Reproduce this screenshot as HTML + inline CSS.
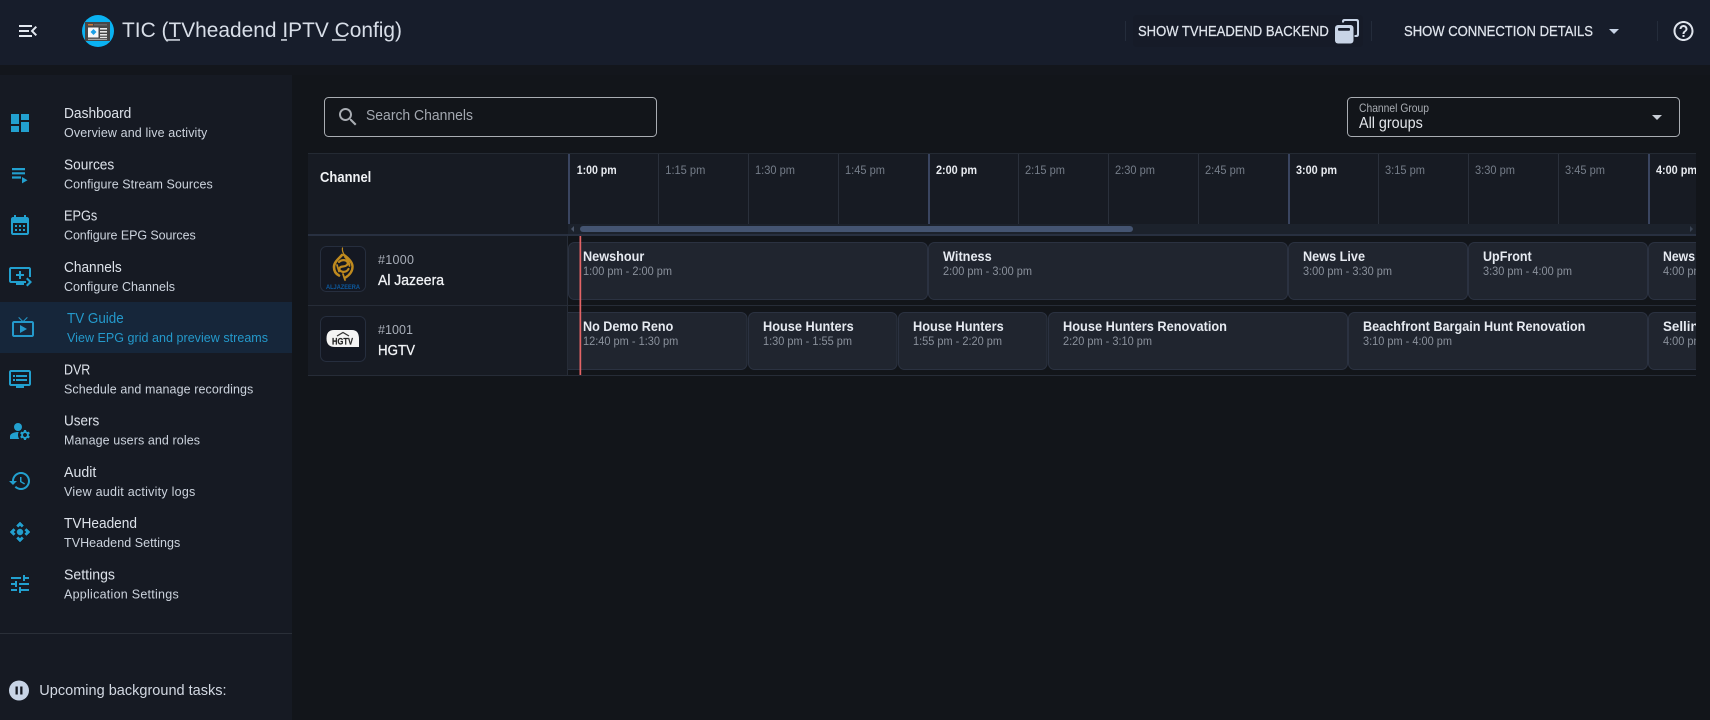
<!DOCTYPE html>
<html lang="en"><head><meta charset="utf-8"><title>TIC (TVheadend IPTV Config)</title>
<style>
html,body{margin:0;padding:0;width:1710px;height:720px;overflow:hidden;background:#12151a}
svg{display:block}
text{font-family:"Liberation Sans",Arial,sans-serif;white-space:pre}
.nt{font-size:14.5px;fill:#dde2ea}
.ns{font-size:12.5px;fill:#ccd3dd}
.ic{fill:#22a0cf}
.tm{font-size:11.5px;fill:#757d89}
.th{font-size:11.5px;font-weight:700;fill:#e8ebf0}
.pt{font-size:13.5px;font-weight:700;fill:#e6eaf1}
.pd{font-size:11.5px;fill:#8a919c}
.p{fill:#20252f;stroke:#2b3241;stroke-width:1}
.hb{font-size:14.5px;fill:#dfe4ec;stroke:#dfe4ec;stroke-width:.25}
</style></head><body>
<svg width="1710" height="720" viewBox="0 0 1710 720" xmlns="http://www.w3.org/2000/svg">
<defs>
<clipPath id="tl"><rect x="568" y="153" width="1128" height="223"/></clipPath>
</defs>
<rect width="1710" height="720" fill="#12151a"/>
<!-- header -->
<rect width="1710" height="65" fill="#171d2b"/>
<rect y="65" width="1710" height="10" fill="#13161c"/>
<path transform="translate(16 19)" fill="#e4e9f1" d="M3 18h13v-2H3v2zm0-5h10v-2H3v2zm0-7v2h13V6H3zm18 9.590L17.420 12 21 8.410 19.590 7l-5 5 5 5L21 15.590z"/>
<circle cx="98" cy="31" r="16" fill="#0ab2f2"/>
<rect x="85" y="22" width="25" height="19" fill="#474747"/>
<rect x="88" y="24" width="5" height="1.500" fill="#c9783a"/>
<rect x="94" y="24" width="13" height="1.500" fill="#666"/>
<rect x="88" y="27.500" width="10.500" height="10" fill="#f4f6f8"/>
<path d="M93.500 29l3 3-3 3-3-3z" fill="#1c9fe6"/>
<rect x="100" y="28" width="7" height="1.600" fill="#e8e8e8"/><rect x="100" y="31" width="7" height="1.600" fill="#e8e8e8"/><rect x="100" y="34" width="7" height="1.600" fill="#e8e8e8"/><rect x="100" y="36.800" width="7" height="1.200" fill="#e8e8e8"/>
<rect x="88" y="38.800" width="19" height="1" fill="#bbb"/>
<text x="122" y="37" font-size="21.500" fill="#d8dee8" textLength="280" lengthAdjust="spacingAndGlyphs">TIC (TVheadend IPTV Config)</text>
<rect x="167" y="39.200" width="13" height="1.500" fill="#d8dee8"/>
<rect x="281" y="39.200" width="6" height="1.500" fill="#d8dee8"/>
<rect x="332" y="39.200" width="14" height="1.500" fill="#d8dee8"/>
<rect x="1125" y="21" width="1" height="20" fill="#242c3b"/>
<rect x="1133" y="15" width="230" height="32" rx="4" fill="#161b28"/>
<text class="hb" x="1138" y="36" textLength="190.800" lengthAdjust="spacingAndGlyphs">SHOW TVHEADEND BACKEND</text>
<path d="M1342 21.500q0-2.500 2.500-2.500h12q2.500 0 2.500 2.500v13q0 2.500-2.500 2.500h-2v-2h1.500q1 0 1-1v-12q0-1-1-1h-11q-1 0-1 1v.5h-2z" fill="#c8d4e6"/>
<rect x="1335" y="25" width="18.500" height="18.500" rx="3" fill="#c8d4e6"/>
<rect x="1338" y="28" width="12" height="2.700" rx="1" fill="#171d2b"/>
<rect x="1371" y="21" width="1" height="20" fill="#242c3b"/>
<text class="hb" x="1404" y="36" textLength="189" lengthAdjust="spacingAndGlyphs">SHOW CONNECTION DETAILS</text>
<path d="M1609 29h10l-5 5z" fill="#c8d4e6"/>
<rect x="1657" y="21" width="1" height="20" fill="#242c3b"/>
<path transform="translate(1671.500 19)" fill="#dfe4ec" d="M11 18h2v-2h-2v2zm1-16C6.480 2 2 6.480 2 12s4.480 10 10 10 10-4.480 10-10S17.520 2 12 2zm0 18c-4.410 0-8-3.590-8-8s3.590-8 8-8 8 3.590 8 8-3.590 8-8 8zm0-14c-2.210 0-4 1.790-4 4h2c0-1.100.9-2 2-2s2 .9 2 2c0 2-3 1.750-3 5h2c0-2.250 3-2.500 3-5 0-2.210-1.790-4-4-4z"/>

<!-- sidebar -->
<rect y="75" width="292" height="645" fill="#161a23"/>
<rect y="302" width="292" height="51" fill="#16263a"/>
<rect y="633" width="292" height="1" fill="#2a2f38"/>
<path class="ic" transform="translate(8 111)" d="M3 13h8V3H3v10zm0 8h8v-6H3v6zm10 0h8V11h-8v10zm0-18v6h8V3h-8z"/>
<path class="ic" d="M12 168h13v2.200H12zM12 172.200h13v2.200H12zM12 176.400h9v2.200H12zM22 177l5.500 3.200-5.500 3.200z"/>
<path class="ic" transform="translate(8 213)" d="M19 4h-1V2h-2v2H8V2H6v2H5c-1.100 0-2 .9-2 2v14c0 1.100.9 2 2 2h14c1.100 0 2-.9 2-2V6c0-1.100-.9-2-2-2zm0 16H5V10h14v10zM9 14H7v-2h2v2zm4 0h-2v-2h2v2zm4 0h-2v-2h2v2zm-8 4H7v-2h2v2zm4 0h-2v-2h2v2zm4 0h-2v-2h2v2z"/>
<path class="ic" transform="translate(8 264)" d="M21 3H3c-1.110 0-2 .89-2 2v12c0 1.100.89 2 2 2h5v2h8v-2h2v-2H3V5h18v8h2V5c0-1.110-.9-2-2-2zm-8 7V7h-2v3H8v2h3v3h2v-3h3v-2h-3zm11 8l-4.500 4.500L18 21l3-3-3-3 1.500-1.500L24 18z"/>
<path fill="#2499cb" transform="translate(11 315)" d="M21 6h-7.590l3.290-3.290L16 2l-4 4-4-4-.71.71L10.590 6H3c-1.100 0-2 .89-2 2v12c0 1.100.9 2 2 2h18c1.100 0 2-.9 2-2V8c0-1.110-.9-2-2-2zm0 14H3V8h18v12zM9 10v8l7-4z"/>
<path class="ic" transform="translate(8 367)" d="M21 3H3c-1.100 0-2 .9-2 2v12c0 1.100.9 2 2 2h5v2h8v-2h5c1.100 0 2-.9 2-2V5c0-1.100-.9-2-2-2zm0 14H3V5h18v12zm-2-9H8v2h11V8zm0 4H8v2h11v-2zM7 8H5v2h2V8zm0 4H5v2h2v-2z"/>
<g class="ic" transform="translate(8 419)"><circle cx="10" cy="8" r="4"/><path d="M10.670 13.020C10.450 13.010 10.230 13 10 13c-2.420 0-4.680.67-6.610 1.820-.88.52-1.390 1.500-1.390 2.530V20h9.260c-.79-1.130-1.260-2.510-1.260-4 0-1.070.25-2.070.67-2.980z"/><path d="M20.750 16c0-.22-.03-.42-.06-.63l1.140-1.010-1-1.730-1.450.49c-.32-.27-.68-.48-1.080-.63L18 11h-2l-.3 1.490c-.4.15-.76.36-1.080.63l-1.450-.49-1 1.730 1.140 1.010c-.03.21-.06.41-.06.63s.03.42.06.63l-1.140 1.010 1 1.730 1.450-.49c.32.27.68.48 1.080.63L16 21h2l.3-1.490c.4-.15.76-.36 1.080-.63l1.450.49 1-1.730-1.140-1.010c.03-.21.06-.41.06-.63zM17 18c-1.100 0-2-.9-2-2s.9-2 2-2 2 .9 2 2-.9 2-2 2z"/></g>
<path class="ic" transform="translate(8 469)" d="M13 3c-4.970 0-9 4.030-9 9H1l3.890 3.890.07.14L9 12H6c0-3.870 3.130-7 7-7s7 3.130 7 7-3.130 7-7 7c-1.930 0-3.680-.79-4.940-2.060l-1.420 1.420C8.270 19.990 10.510 21 13 21c4.970 0 9-4.030 9-9s-4.030-9-9-9zm-1 5v5l4.280 2.540.72-1.210-3.500-2.080V8H12z"/>
<g class="ic" stroke="#22a0cf" stroke-width=".5" transform="translate(8 520)"><path d="M15.540 5.540L13.770 7.300 12 5.540 10.230 7.300 8.460 5.540 12 2l3.540 3.540zm2.920 10l-1.760-1.770L18.460 12l-1.760-1.770 1.760-1.770L22 12l-3.540 3.540zm-10 2.920l1.770-1.760L12 18.460l1.770-1.760 1.770 1.760L12 22l-3.540-3.540zm-2.920-10l1.760 1.770L5.540 12l1.760 1.770-1.760 1.770L2 12l3.540-3.540z"/><circle cx="12" cy="12" r="3"/></g>
<path class="ic" transform="translate(8 572)" d="M3 17v2h6v-2H3zM3 5v2h10V5H3zm10 16v-2h8v-2h-8v-2h-2v6h2zM7 9v2H3v2h4v2h2V9H7zm14 4v-2H11v2h10zm-6-4h2V7h4V5h-4V3h-2v6z"/>

<text class="nt" x="64" y="118" textLength="67.300" lengthAdjust="spacingAndGlyphs">Dashboard</text><text class="ns" x="64" y="137" textLength="143.300">Overview and live activity</text>
<text class="nt" x="64" y="169.250" textLength="50.300" lengthAdjust="spacingAndGlyphs">Sources</text><text class="ns" x="64" y="188.250" textLength="148.700">Configure Stream Sources</text>
<text class="nt" x="64" y="220.500" textLength="33.300" lengthAdjust="spacingAndGlyphs">EPGs</text><text class="ns" x="64" y="239.500" textLength="131.700">Configure EPG Sources</text>
<text class="nt" x="64" y="271.750" textLength="57.700" lengthAdjust="spacingAndGlyphs">Channels</text><text class="ns" x="64" y="290.750" textLength="111">Configure Channels</text>
<text class="nt" x="67" y="323" textLength="56.700" lengthAdjust="spacingAndGlyphs" style="fill:#2499cb">TV Guide</text><text class="ns" x="67" y="342" textLength="201" style="fill:#2499cb">View EPG grid and preview streams</text>
<text class="nt" x="64" y="374.250" textLength="26.300" lengthAdjust="spacingAndGlyphs">DVR</text><text class="ns" x="64" y="393.250" textLength="189.300">Schedule and manage recordings</text>
<text class="nt" x="64" y="425.500" textLength="35.300" lengthAdjust="spacingAndGlyphs">Users</text><text class="ns" x="64" y="444.500" textLength="136">Manage users and roles</text>
<text class="nt" x="64" y="476.750" textLength="32.300" lengthAdjust="spacingAndGlyphs">Audit</text><text class="ns" x="64" y="495.750" textLength="131.300">View audit activity logs</text>
<text class="nt" x="64" y="528" textLength="73" lengthAdjust="spacingAndGlyphs">TVHeadend</text><text class="ns" x="64" y="547" textLength="116.300">TVHeadend Settings</text>
<text class="nt" x="64" y="579.250" textLength="51" lengthAdjust="spacingAndGlyphs">Settings</text><text class="ns" x="64" y="598.250" textLength="114.700">Application Settings</text>

<circle cx="19" cy="690.500" r="10" fill="#c8d4e6"/>
<rect x="15.500" y="686.500" width="2.300" height="8" fill="#161a23"/><rect x="20.200" y="686.500" width="2.300" height="8" fill="#161a23"/>
<text x="39.300" y="695" font-size="14.500" fill="#d2d8e2" textLength="187.300" lengthAdjust="spacingAndGlyphs">Upcoming background tasks:</text>

<!-- search and select -->
<rect x="324.500" y="97.500" width="332" height="39" rx="4" fill="none" stroke="#a9adb3"/>
<path transform="translate(336 105)" fill="#a9adb3" d="M15.500 14h-.79l-.28-.27C15.410 12.590 16 11.110 16 9.500 16 5.910 13.090 3 9.500 3S3 5.910 3 9.500 5.910 16 9.500 16c1.610 0 3.090-.59 4.230-1.570l.27.28v.79l5 4.990L20.490 19l-4.990-5zm-6 0C7.010 14 5 11.990 5 9.500S7.010 5 9.500 5 14 7.010 14 9.500 11.990 14 9.500 14z"/>
<text x="366" y="120" font-size="14.500" fill="#a3a8b0" textLength="107" lengthAdjust="spacingAndGlyphs">Search Channels</text>
<rect x="1347.500" y="97.500" width="332" height="39" rx="4" fill="none" stroke="#a9adb3"/>
<text x="1359" y="112" font-size="12" fill="#a9adb3" textLength="70" lengthAdjust="spacingAndGlyphs">Channel Group</text>
<text x="1359" y="128" font-size="16" fill="#e4e7ec" textLength="63.800" lengthAdjust="spacingAndGlyphs">All groups</text>
<path d="M1652 115h10l-5 5z" fill="#c8cdd5"/>

<!-- table header -->
<rect x="308" y="153" width="1388" height="71" fill="#171b23"/>
<rect x="308" y="153" width="1388" height="1" fill="#242a33"/>
<rect x="308" y="224" width="260" height="11" fill="#171b23"/>
<rect x="568" y="224" width="1128" height="11" fill="#1c222c"/>
<rect x="308" y="234" width="1388" height="2" fill="#283040"/>
<text x="320" y="182" font-size="14.500" font-weight="700" fill="#f0f2f5" textLength="51.300" lengthAdjust="spacingAndGlyphs">Channel</text>
<g fill="#2a303b">
<rect x="658" y="154" width="1" height="70"/><rect x="748" y="154" width="1" height="70"/><rect x="838" y="154" width="1" height="70"/>
<rect x="1018" y="154" width="1" height="70"/><rect x="1108" y="154" width="1" height="70"/><rect x="1198" y="154" width="1" height="70"/>
<rect x="1378" y="154" width="1" height="70"/><rect x="1468" y="154" width="1" height="70"/><rect x="1558" y="154" width="1" height="70"/>
</g>
<g fill="#3a4560">
<rect x="568" y="154" width="2" height="70"/><rect x="928" y="154" width="2" height="70"/><rect x="1288" y="154" width="2" height="70"/><rect x="1648" y="154" width="2" height="70"/>
</g>
<g clip-path="url(#tl)">
<text class="th" x="576.700" y="174" textLength="40" lengthAdjust="spacingAndGlyphs">1:00 pm</text>
<text class="tm" x="665.300" y="174" textLength="40" lengthAdjust="spacingAndGlyphs">1:15 pm</text>
<text class="tm" x="755" y="174" textLength="40" lengthAdjust="spacingAndGlyphs">1:30 pm</text>
<text class="tm" x="845" y="174" textLength="40" lengthAdjust="spacingAndGlyphs">1:45 pm</text>
<text class="th" x="936" y="174" textLength="41" lengthAdjust="spacingAndGlyphs">2:00 pm</text>
<text class="tm" x="1025" y="174" textLength="40" lengthAdjust="spacingAndGlyphs">2:15 pm</text>
<text class="tm" x="1115" y="174" textLength="40" lengthAdjust="spacingAndGlyphs">2:30 pm</text>
<text class="tm" x="1205" y="174" textLength="40" lengthAdjust="spacingAndGlyphs">2:45 pm</text>
<text class="th" x="1296" y="174" textLength="41" lengthAdjust="spacingAndGlyphs">3:00 pm</text>
<text class="tm" x="1385" y="174" textLength="40" lengthAdjust="spacingAndGlyphs">3:15 pm</text>
<text class="tm" x="1475" y="174" textLength="40" lengthAdjust="spacingAndGlyphs">3:30 pm</text>
<text class="tm" x="1565" y="174" textLength="40" lengthAdjust="spacingAndGlyphs">3:45 pm</text>
<text class="th" x="1656" y="174" textLength="41" lengthAdjust="spacingAndGlyphs">4:00 pm</text>
</g>
<rect x="580" y="226" width="553" height="6" rx="3" fill="#445471"/>
<path d="M574 226v6l-3-3z" fill="#4a5568"/>
<path d="M1690 226v6l3-3z" fill="#3a4454"/>

<!-- rows -->
<rect x="308" y="236" width="259" height="139" fill="#171b23"/>
<rect x="567" y="236" width="1" height="139" fill="#262c37"/>
<rect x="308" y="305" width="1388" height="1" fill="#262c37"/>
<rect x="308" y="375" width="1388" height="1" fill="#262c37"/>

<rect x="320.500" y="246.500" width="45" height="45" rx="6" fill="#141822" stroke="#262e3e"/>
<rect x="320.500" y="316.500" width="45" height="45" rx="6" fill="#141822" stroke="#262e3e"/>
<g fill="none" stroke="#bf8a1e" stroke-linecap="round">
<path stroke-width="1.200" d="M342.500 248c-.5 3 .5 5 2 7"/>
<path stroke-width="2.400" d="M344 255c3.500 2.500 8 6 8.500 11 .3 5-3 9-7 11.500"/>
<path stroke-width="2.600" d="M342 255c-3 3.500-8 7-8 12 0 4 2 7 5 8.500"/>
<path stroke-width="2.200" d="M339 262c2.500-2.500 7-2.500 8.500 0s-2 4.500-4.500 4.500-5 2-3 4 6.500 2 8.500-1.500"/>
<path stroke-width="1.800" d="M345 257c2 2 4.500 5 4.500 9M337 265l2 6.500M343 274l2 6"/>
</g>
<text x="326" y="289" font-size="6" font-weight="700" fill="#0d5aa0" textLength="34" lengthAdjust="spacingAndGlyphs">ALJAZEERA</text>
<path d="M334 330h18q7 0 7 9v8h-24q-8.500 0-8.500-8.500t7.500-8.500z" fill="#f4f4f4"/>
<path d="M337 336l6-3.500 6 3.500" fill="none" stroke="#333" stroke-width="1.300"/>
<text x="332" y="344.500" font-size="9" font-weight="700" fill="#222" stroke="#222" stroke-width=".2" textLength="21" lengthAdjust="spacingAndGlyphs">HGTV</text>
<text x="378" y="264" font-size="12.500" fill="#a8aeb8" textLength="36">#1000</text>
<text x="378" y="285" font-size="15" fill="#f0f2f5" stroke="#f0f2f5" stroke-width=".3" textLength="66" lengthAdjust="spacingAndGlyphs">Al Jazeera</text>
<text x="378" y="334" font-size="12.500" fill="#a8aeb8" textLength="35">#1001</text>
<text x="378" y="355" font-size="15" fill="#f0f2f5" stroke="#f0f2f5" stroke-width=".3" textLength="37" lengthAdjust="spacingAndGlyphs">HGTV</text>

<g clip-path="url(#tl)">
<rect class="p" x="568.500" y="242.500" width="359" height="57" rx="6"/>
<rect class="p" x="928.500" y="242.500" width="359" height="57" rx="6"/>
<rect class="p" x="1288.500" y="242.500" width="179" height="57" rx="6"/>
<rect class="p" x="1468.500" y="242.500" width="179" height="57" rx="6"/>
<rect class="p" x="1648.500" y="242.500" width="179" height="57" rx="6"/>
<rect class="p" x="540.500" y="312.500" width="206.500" height="57" rx="6"/>
<rect class="p" x="748.500" y="312.500" width="148.500" height="57" rx="6"/>
<rect class="p" x="898.500" y="312.500" width="148.500" height="57" rx="6"/>
<rect class="p" x="1048.500" y="312.500" width="299" height="57" rx="6"/>
<rect class="p" x="1348.500" y="312.500" width="299" height="57" rx="6"/>
<rect class="p" x="1648.500" y="312.500" width="299" height="57" rx="6"/>

<text class="pt" x="583" y="261" textLength="61.300" lengthAdjust="spacingAndGlyphs">Newshour</text><text class="pd" x="583" y="275" textLength="89" lengthAdjust="spacingAndGlyphs">1:00 pm - 2:00 pm</text>
<text class="pt" x="943" y="261" textLength="48.700" lengthAdjust="spacingAndGlyphs">Witness</text><text class="pd" x="943" y="275" textLength="89" lengthAdjust="spacingAndGlyphs">2:00 pm - 3:00 pm</text>
<text class="pt" x="1303" y="261" textLength="62" lengthAdjust="spacingAndGlyphs">News Live</text><text class="pd" x="1303" y="275" textLength="89" lengthAdjust="spacingAndGlyphs">3:00 pm - 3:30 pm</text>
<text class="pt" x="1483" y="261" textLength="48.700" lengthAdjust="spacingAndGlyphs">UpFront</text><text class="pd" x="1483" y="275" textLength="89" lengthAdjust="spacingAndGlyphs">3:30 pm - 4:00 pm</text>
<text class="pt" x="1663" y="261" textLength="60" lengthAdjust="spacingAndGlyphs">News Live</text><text class="pd" x="1663" y="275" textLength="89" lengthAdjust="spacingAndGlyphs">4:00 pm - 5:00 pm</text>
<text class="pt" x="583" y="331" textLength="90.300" lengthAdjust="spacingAndGlyphs">No Demo Reno</text><text class="pd" x="583" y="345" textLength="95.300" lengthAdjust="spacingAndGlyphs">12:40 pm - 1:30 pm</text>
<text class="pt" x="763" y="331" textLength="90.700" lengthAdjust="spacingAndGlyphs">House Hunters</text><text class="pd" x="763" y="345" textLength="89" lengthAdjust="spacingAndGlyphs">1:30 pm - 1:55 pm</text>
<text class="pt" x="913" y="331" textLength="90.700" lengthAdjust="spacingAndGlyphs">House Hunters</text><text class="pd" x="913" y="345" textLength="89" lengthAdjust="spacingAndGlyphs">1:55 pm - 2:20 pm</text>
<text class="pt" x="1063" y="331" textLength="164" lengthAdjust="spacingAndGlyphs">House Hunters Renovation</text><text class="pd" x="1063" y="345" textLength="89" lengthAdjust="spacingAndGlyphs">2:20 pm - 3:10 pm</text>
<text class="pt" x="1363" y="331" textLength="222.300" lengthAdjust="spacingAndGlyphs">Beachfront Bargain Hunt Renovation</text><text class="pd" x="1363" y="345" textLength="89" lengthAdjust="spacingAndGlyphs">3:10 pm - 4:00 pm</text>
<text class="pt" x="1663" y="331" textLength="92" lengthAdjust="spacingAndGlyphs">Selling Sunset</text><text class="pd" x="1663" y="345" textLength="89" lengthAdjust="spacingAndGlyphs">4:00 pm - 5:00 pm</text>
</g>
<rect x="579.500" y="236" width="1.700" height="139" fill="#e46466"/>
</svg>
</body></html>
